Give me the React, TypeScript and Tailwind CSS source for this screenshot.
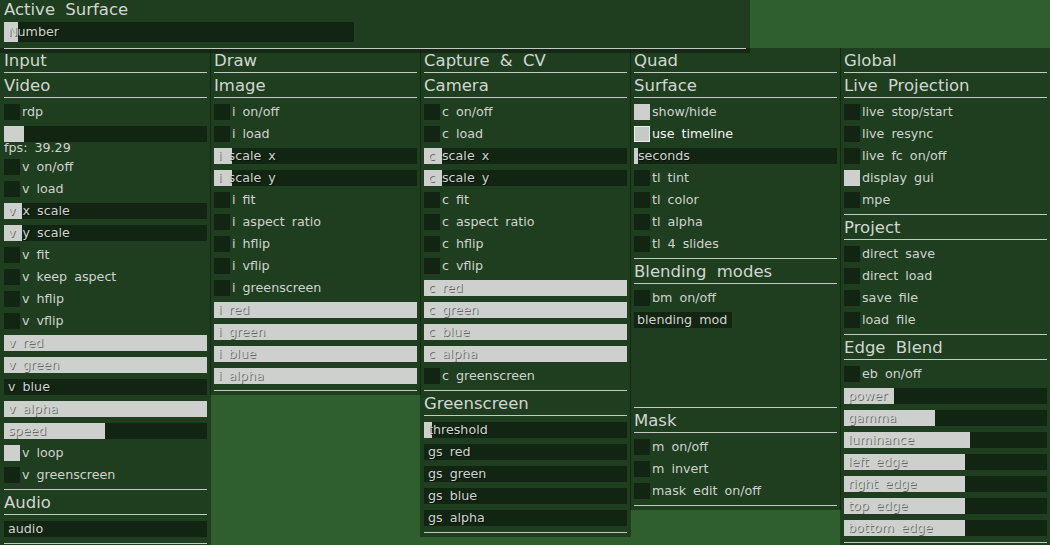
import React from 'react';

type Row =
  | { t: 'toggle'; label: string; on?: boolean; hot?: boolean }
  | { t: 'slider'; label: string; fill: number; note?: string }
  | { t: 'field'; label: string }
  | { t: 'dropdown'; label: string };

type Section = { title: string; rows: Row[] };
type Column = { title: string; sections: Section[] };

const tg = (label: string, on = false, hot = false): Row => ({ t: 'toggle', label, on, hot });
const sl = (label: string, fill: number, note?: string): Row => ({ t: 'slider', label, fill, note });

const columns: Column[] = [
  {
    title: 'Input',
    sections: [
      {
        title: 'Video',
        rows: [
          tg('rdp'),
          sl('', 20, 'fps: 39.29'),
          tg('v on/off'),
          tg('v load'),
          sl('v x scale', 18),
          sl('v y scale', 18),
          tg('v fit'),
          tg('v keep aspect'),
          tg('v hflip'),
          tg('v vflip'),
          sl('v red', 203),
          sl('v green', 203),
          sl('v blue', 0),
          sl('v alpha', 203),
          sl('speed', 101),
          tg('v loop', true),
          tg('v greenscreen'),
        ],
      },
      { title: 'Audio', rows: [{ t: 'field', label: 'audio' }] },
    ],
  },
  {
    title: 'Draw',
    sections: [
      {
        title: 'Image',
        rows: [
          tg('i on/off'),
          tg('i load'),
          sl('i scale x', 18),
          sl('i scale y', 18),
          tg('i fit'),
          tg('i aspect ratio'),
          tg('i hflip'),
          tg('i vflip'),
          tg('i greenscreen'),
          sl('i red', 203),
          sl('i green', 203),
          sl('i blue', 203),
          sl('i alpha', 203),
        ],
      },
    ],
  },
  {
    title: 'Capture & CV',
    sections: [
      {
        title: 'Camera',
        rows: [
          tg('c on/off'),
          tg('c load'),
          sl('c scale x', 18),
          sl('c scale y', 18),
          tg('c fit'),
          tg('c aspect ratio'),
          tg('c hflip'),
          tg('c vflip'),
          sl('c red', 203),
          sl('c green', 203),
          sl('c blue', 203),
          sl('c alpha', 203),
          tg('c greenscreen'),
        ],
      },
      {
        title: 'Greenscreen',
        rows: [sl('threshold', 8), sl('gs red', 0), sl('gs green', 0), sl('gs blue', 0), sl('gs alpha', 0)],
      },
    ],
  },
  {
    title: 'Quad',
    sections: [
      {
        title: 'Surface',
        rows: [
          tg('show/hide', true),
          tg('use timeline', true, true),
          sl('seconds', 4),
          tg('tl tint'),
          tg('tl color'),
          tg('tl alpha'),
          tg('tl 4 slides'),
        ],
      },
      { title: 'Blending modes', rows: [tg('bm on/off'), { t: 'dropdown', label: 'blending mod' }] },
      { title: 'Mask', rows: [tg('m on/off'), tg('m invert'), tg('mask edit on/off')] },
    ],
  },
  {
    title: 'Global',
    sections: [
      {
        title: 'Live Projection',
        rows: [tg('live stop/start'), tg('live resync'), tg('live fc on/off'), tg('display gui', true), tg('mpe')],
      },
      { title: 'Project', rows: [tg('direct save'), tg('direct load'), tg('save file'), tg('load file')] },
      {
        title: 'Edge Blend',
        rows: [
          tg('eb on/off'),
          sl('power', 50),
          sl('gamma', 91),
          sl('luminance', 126),
          sl('left edge', 121),
          sl('right edge', 121),
          sl('top edge', 121),
          sl('bottom edge', 121),
        ],
      },
    ],
  },
];

const Header = ({ text }: { text: string }) => (
  <div className="h-[25px] border-b border-[#c5c9c5] text-[16.5px] leading-[26px] text-[#d2d6d2] [word-spacing:5px] whitespace-nowrap">
    {text}
  </div>
);

const Rule = () => <div className="h-px bg-[#c5c9c5]" />;

function Slider({ label, fill, tall }: { label: string; fill: number; tall?: boolean }) {
  return (
    <div className={`relative w-full bg-[#122412] ${tall ? 'h-[20px] leading-[20px]' : 'h-[16px] leading-[16px]'}`}>
      <div className="absolute left-0 top-0 h-full bg-[#cdd0cc]" style={{ width: fill }} />
      <div className="relative pl-[4px] whitespace-nowrap [text-shadow:1px_1px_0_rgba(0,0,0,0.5)]">{label}</div>
    </div>
  );
}

function Widget({ row }: { row: Row }) {
  if (row.t === 'toggle') {
    return (
      <div className="flex h-[16px] items-center leading-[16px]">
        <div
          className={
            row.hot
              ? 'h-[16px] w-[16px] border border-[#eceeec] bg-[#c6cac6]'
              : row.on
                ? 'h-[16px] w-[16px] bg-[#cdd0cc]'
                : 'h-[16px] w-[16px] bg-[#122412]'
          }
        />
        <span className={`ml-[2px] whitespace-nowrap ${row.hot ? 'text-[#f2f4f2]' : ''}`}>{row.label}</span>
      </div>
    );
  }
  if (row.t === 'slider') {
    return (
      <div>
        <Slider label={row.label} fill={row.fill} />
        {row.note && <div className="h-[11px] leading-[11px] whitespace-nowrap">{row.note}</div>}
      </div>
    );
  }
  if (row.t === 'field') {
    return <div className="h-[16px] bg-[#122412] pl-[4px] leading-[16px]">{row.label}</div>;
  }
  return (
    <div className="h-[89px]">
      <div className="h-[16px] w-[98px] bg-[#122412] pl-[3px] leading-[16px] whitespace-nowrap">{row.label}</div>
    </div>
  );
}

export default function App() {
  return (
    <div className="h-[545px] w-[1050px] overflow-hidden bg-[#2f5f2f] font-['DejaVu_Sans',sans-serif] text-[12.7px] text-[#cfd3cf] [word-spacing:3px]">
      <div className="relative z-10 h-[53px] w-[750px] bg-[rgba(0,0,0,0.34)] px-[4px]">
        <div className="h-[22px] text-[16.5px] leading-[20px] text-[#d2d6d2] [word-spacing:5px]">Active Surface</div>
        <div className="w-[350px]">
          <Slider label="Number" fill={14} tall />
        </div>
        <div className="mt-[6px]">
          <Rule />
        </div>
      </div>
      <div className="-mt-[5px] flex items-start">
        {columns.map((col, i) => (
          <div
            key={col.title}
            className={`w-[211px] shrink-0 bg-[rgba(0,0,0,0.34)] px-[4px] pb-[4px] ${i > 0 ? '-ml-px' : ''}`}
          >
            <Header text={col.title} />
            {col.sections.map((sec) => (
              <div key={sec.title}>
                <Header text={sec.title} />
                <div className="flex flex-col gap-[6px] py-[6px]">
                  {sec.rows.map((row, j) => (
                    <Widget key={j} row={row} />
                  ))}
                </div>
                <Rule />
              </div>
            ))}
          </div>
        ))}
      </div>
    </div>
  );
}
